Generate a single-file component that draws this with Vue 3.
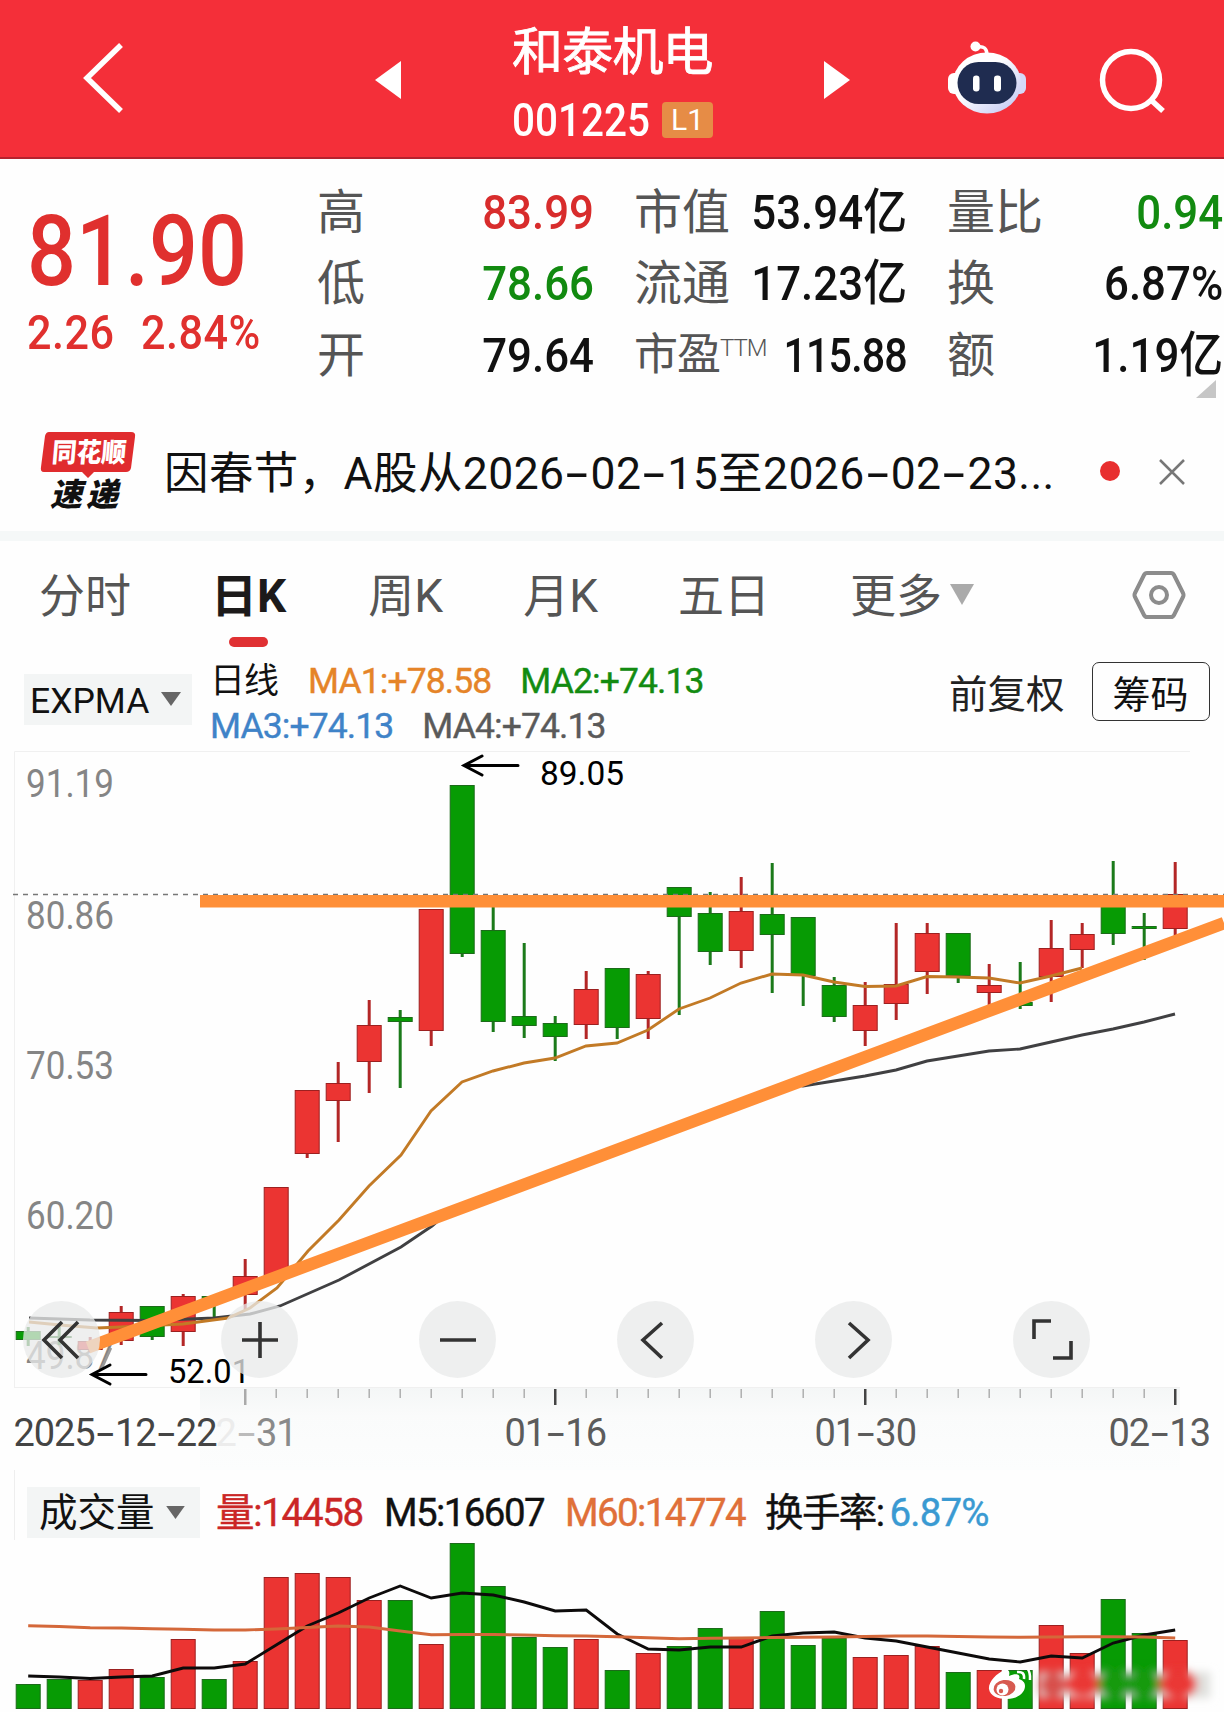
<script setup>
import { computed } from 'vue';

const quote = [
  { label: '高', value: '83.99', tone: 'up' },
  { label: '市值', value: '53.94亿' },
  { label: '量比', value: '0.94', tone: 'down' },
  { label: '低', value: '78.66', tone: 'down' },
  { label: '流通', value: '17.23亿' },
  { label: '换', value: '6.87%' },
  { label: '开', value: '79.64' },
  { label: '市盈', sup: 'TTM', value: '115.88' },
  { label: '额', value: '1.19亿' }
];

const notice = '因春节，A股从2026-02-15至2026-02-23...';
const noticeParts = notice.split(/(-)/);

const tabs = ['分时', '日K', '周K', '月K', '五日', '更多'];
const activeTab = '日K';

const STEP = 31;
const cx = (i) => 28.2 + i * STEP;

// kind, body top, body bottom, high, low
const candles = [
  ['g', 1331, 1340, 1327, 1346],
  ['g', 1336, 1338, 1325, 1345],
  ['r', 1341, 1350, 1337, 1352],
  ['r', 1312, 1341, 1306, 1345],
  ['g', 1306, 1337, 1306, 1340],
  ['r', 1296, 1332, 1294, 1346],
  ['g', 1296, 1301, 1296, 1318],
  ['r', 1276, 1295, 1259, 1310],
  ['r', 1187, 1277, 1187, 1277],
  ['r', 1090, 1154, 1090, 1158],
  ['r', 1083, 1101, 1062, 1142],
  ['r', 1025, 1062, 1000, 1093],
  ['g', 1017, 1022, 1010, 1088],
  ['r', 909, 1031, 909, 1046],
  ['g', 785, 954, 785, 957],
  ['g', 930, 1022, 903, 1032],
  ['g', 1016, 1026, 943, 1038],
  ['g', 1023, 1037, 1016, 1061],
  ['r', 989, 1025, 971, 1039],
  ['g', 968, 1028, 968, 1039],
  ['r', 974, 1019, 971, 1039],
  ['g', 887, 917, 887, 1015],
  ['g', 913, 952, 892, 965],
  ['r', 911, 951, 877, 968],
  ['g', 914, 935, 863, 993],
  ['g', 917, 976, 917, 1006],
  ['g', 985, 1017, 977, 1022],
  ['r', 1005, 1031, 982, 1046],
  ['r', 984, 1004, 923, 1020],
  ['r', 933, 972, 923, 994],
  ['g', 933, 976, 933, 983],
  ['r', 985, 993, 964, 1007],
  ['g', 1002, 1006, 962, 1009],
  ['r', 948, 977, 920, 1002],
  ['r', 934, 950, 923, 968],
  ['g', 903, 934, 861, 945],
  ['g', 926, 929, 913, 960],
  ['r', 894, 929, 862, 938]
];

const volumes = [
  1684, 1679, 1680, 1669, 1677, 1639, 1679, 1661, 1577, 1573, 1577, 1600, 1600,
  1644, 1543, 1586, 1637, 1647, 1639, 1670, 1653, 1646, 1628, 1638, 1611, 1645,
  1638, 1657, 1655, 1646, 1672, 1670, 1670, 1625, 1653, 1599, 1633, 1640
];
const volKind = (i) => candles[i][0];

const m5 = [
  1676, 1677, 1678.5, 1677, 1676, 1668, 1668, 1664, 1645, 1626, 1613, 1598,
  1586, 1598, 1593, 1595, 1602, 1611, 1610, 1634, 1649, 1650, 1647, 1647, 1636,
  1633, 1632, 1638, 1641, 1647, 1653, 1659, 1662, 1656, 1658, 1643, 1635, 1630
];
const m60 = [
  1625.7, 1626.5, 1627.7, 1628, 1628.7, 1629.2, 1630, 1630, 1629, 1627.5, 1626,
  1627, 1631, 1634.7, 1634.5, 1634.5, 1635, 1635.7, 1636, 1636.7, 1637.7,
  1638.7, 1638.2, 1638, 1637.5, 1637.2, 1637, 1636.5, 1636, 1636, 1636.5,
  1637, 1637.3, 1637, 1636.8, 1636.7, 1637, 1638
];
const toPoints = (list) => list.map((y, i) => `${cx(i)},${y}`).join(' ');
const m5Points = computed(() => toPoints(m5));
const m60Points = computed(() => toPoints(m60));

const ma1 =
  '29,1322 60,1325 97,1328 121,1327 183,1324 228,1318 250,1308 277,1288 308,1251 339,1220 369,1186 401,1155 431,1111 462,1082 493,1071 524,1063 555,1058 586,1046 617,1043 648,1030 679,1009 710,998 741,983 772,974 803,975 834,982 865,986.5 896,986 927,976.5 958,977 989,978 1020,983 1051,976 1082,968';
const ma4 =
  '29,1318 90,1320 152,1320.5 214,1318 250,1314 280,1306 339,1280 401,1247 432,1226 446,1214 620,1149 795,1084 803,1086 834,1081 865,1076 896,1070 927,1061 958,1056 989,1051 1020,1049 1051,1042 1082,1035 1113,1029 1144,1022 1175,1014';

const scale = [
  { text: '91.19', y: 797 },
  { text: '80.86', y: 929 },
  { text: '70.53', y: 1079 },
  { text: '60.20', y: 1229 },
  { text: '49.87', y: 1369 }
];

const ticks = Array.from({ length: 31 }, (_, i) => i + 7);
const isMajor = (i) => i % 10 === 7;

// every character of a date takes one cell of the same width
const dates = [
  { text: '2025-12-22', x: 14, cls: 'dark' },
  { text: '2-31', x: 216, cls: 'faded' },
  { text: '01-16', x: 505, cls: '' },
  { text: '01-30', x: 815, cls: '' },
  { text: '02-13', x: 1109, cls: '' }
];
const CELL = 20.3;
</script>

<template>
  <div class="page">
    <header class="top">
      <svg class="back" width="46" height="76" viewBox="0 0 46 76">
        <path d="M40 5 6 38 40 71" />
      </svg>
      <svg class="tri prev" width="26" height="38" viewBox="0 0 26 38"><path d="M26 0v38L0 19z" /></svg>
      <div class="title">
        <div class="name">和泰机电</div>
        <div class="code"><span class="num">001225</span><span class="badge">L1</span></div>
      </div>
      <svg class="tri next" width="26" height="38" viewBox="0 0 26 38"><path d="M0 0v38L26 19z" /></svg>
      <svg class="robot" width="80" height="76" viewBox="0 0 80 76">
        <defs>
          <linearGradient id="shell" x1="0" y1="0" x2="1" y2="1">
            <stop offset="0.4" stop-color="#fff" />
            <stop offset="1" stop-color="#bcc2f2" />
          </linearGradient>
        </defs>
        <path d="M30 7Q40 5 40 15" class="antenna" />
        <circle cx="28.500" cy="6.500" r="5" fill="#fff" />
        <rect x="1" y="33" width="14" height="21" rx="6" fill="#fff" />
        <rect x="65" y="33" width="14" height="21" rx="6" fill="#d5d8f8" />
        <ellipse cx="40" cy="43" rx="34" ry="30.500" fill="url(#shell)" />
        <rect x="10.500" y="22" width="59" height="42" rx="21" fill="#1f2c50" />
        <rect x="26" y="35.500" width="6.500" height="16" rx="3.200" fill="#fff" />
        <rect x="47" y="35.500" width="7" height="16" rx="3.200" fill="#fff" />
      </svg>
      <svg class="search" width="70" height="70" viewBox="0 0 70 70">
        <circle cx="33" cy="33" r="28.500" />
        <path d="M53 53 65 64" />
      </svg>
    </header>

    <section class="quote">
      <div class="price">
        <div class="last">81.90</div>
        <div class="change"><span>2.26</span><span>2.84%</span></div>
      </div>
      <div class="grid">
        <div v-for="q in quote" :key="q.label" class="cell" :class="{ tight: q.sup }">
          <span class="label">{{ q.label }}<sup v-if="q.sup">{{ q.sup }}</sup></span>
          <span class="value" :class="q.tone">{{ q.value }}</span>
        </div>
      </div>
      <svg class="corner" width="20" height="18" viewBox="0 0 20 18"><path d="M20 0v18H0z" /></svg>
    </section>

    <section class="notice">
      <div class="logo">
        <svg width="98" height="47" viewBox="0 0 98 47">
          <path d="M9 0H91Q96 0 95 5L91 36Q90 40 86 40H54L48 46 42 40H4Q0 40 1 35L5 4Q6 0 9 0Z" />
          <text x="50" y="30" text-anchor="middle" textLength="74" lengthAdjust="spacingAndGlyphs" transform="skewX(-5) translate(1 0)">同花顺</text>
        </svg>
        <b>速递</b>
      </div>
      <p>
        <template v-for="(part, i) in noticeParts" :key="i">
          <span v-if="part === '-'" class="dash">-</span>
          <template v-else>{{ part }}</template>
        </template>
      </p>
      <i class="dot"></i>
      <svg class="close" width="28" height="28" viewBox="0 0 28 28"><path d="M2 2 26 26M26 2 2 26" /></svg>
    </section>

    <nav class="tabs">
      <span v-for="t in tabs" :key="t" class="tab" :class="{ active: t === activeTab }">
        {{ t }}<svg v-if="t === '更多'" width="24" height="21" viewBox="0 0 24 21"><path d="M0 0H24L12 21z" /></svg>
      </span>
      <svg class="setting" width="54" height="50" viewBox="0 0 54 50">
        <path d="M15 3H39Q41 3 42 5L51 23Q52 25 51 27L42 45Q41 47 39 47H15Q13 47 12 45L3 27Q2 25 3 23L12 5Q13 3 15 3Z" />
        <circle cx="27" cy="25" r="8" />
      </svg>
    </nav>

    <section class="indicator">
      <div class="picker">EXPMA<svg width="20" height="14" viewBox="0 0 20 14"><path d="M0 0H20L10 14z" /></svg></div>
      <div class="ma">
        <div><span class="day">日线</span><span class="c1">MA1:+78.58</span><span class="c2">MA2:+74.13</span></div>
        <div><span class="c3">MA3:+74.13</span><span class="c4">MA4:+74.13</span></div>
      </div>
      <span class="adjust">前复权</span>
      <button class="chips">筹码</button>
    </section>

    <section class="kline">
      <svg width="1224" height="725" viewBox="0 745 1224 725">
        <defs>
          <linearGradient id="axisBg" x1="0" y1="0" x2="0" y2="1">
            <stop offset="0" stop-color="#f4f6f6" />
            <stop offset="0.35" stop-color="#fafbfb" />
            <stop offset="1" stop-color="#fcfdfd" />
          </linearGradient>
        </defs>
        <rect x="200" y="1387" width="980" height="83" fill="url(#axisBg)" />
        <path d="M14.500 1387V751.500H1190M14 1387.500H1180" class="frame" />
        <text v-for="s in scale" :key="s.text" x="26" :y="s.y" textLength="88" lengthAdjust="spacingAndGlyphs" class="scale">{{ s.text }}</text>

        <g v-for="(c, i) in candles" :key="i" :class="c[0]">
          <rect :x="cx(i) - 1.5" :y="c[3]" width="3" :height="c[4] - c[3]" class="wick" />
          <rect :x="cx(i) - 12" :y="c[1] + 0.5" width="24" :height="Math.max(c[2] - c[1] - 1, 1)" class="body" />
        </g>

        <polyline :points="ma4" class="line ma4" />
        <polyline :points="ma1" class="line ma1" />
        <path d="M13 894.500H1224" class="current" />
        <path d="M200 901.200H1224M88 1347.500 1224 923" class="trend" />

        <path d="M518 765.500H464M482 756 464 765.500 482 775" class="arrow" />
        <text x="540" y="785" textLength="84" lengthAdjust="spacingAndGlyphs" class="mark">89.05</text>
        <path d="M111 1348 102 1368" class="leader" />
        <path d="M146 1374.500H92M110 1365 92 1374.500 110 1384" class="arrow" />
        <text x="168" y="1383" textLength="82" lengthAdjust="spacingAndGlyphs" class="mark">52.01</text>

        <g v-for="i in ticks" :key="i">
          <rect v-if="isMajor(i)" :x="cx(i) - 1.2" y="1389" width="2.500" height="16" :fill="i === 7 ? '#aaa' : '#444'" />
          <rect v-else :x="cx(i) - 0.7" y="1389" width="1.400" height="9" fill="#aaa" />
        </g>
        <g v-for="d in dates" :key="d.x" class="date" :class="d.cls">
          <template v-for="(ch, k) in d.text" :key="k">
            <text v-if="ch === '-'" :x="d.x + CELL * (k + 0.5)" y="1445.500" textLength="22" lengthAdjust="spacingAndGlyphs" class="hy">-</text>
            <text v-else :x="d.x + CELL * (k + 0.5)" y="1445.500">{{ ch }}</text>
          </template>
        </g>
      </svg>
      <div class="tools">
        <button><svg viewBox="0 0 44 44"><path d="M22 4 4 22 22 40M38 4 20 22 38 40" /></svg></button>
        <button><svg viewBox="0 0 44 44"><path d="M22 4V40M4 22H40" /></svg></button>
        <button><svg viewBox="0 0 44 44"><path d="M4 22H40" /></svg></button>
        <button><svg viewBox="0 0 44 44"><path d="M28 5 9 22 28 40" /></svg></button>
        <button><svg viewBox="0 0 44 44"><path d="M17 5 36 22 17 40" /></svg></button>
        <button><svg viewBox="0 0 44 44"><path d="M21 3H4V21M41 23V40H23" /></svg></button>
      </div>
    </section>

    <section class="volume">
      <div class="vhead">
        <div class="picker">成交量<svg width="19" height="13" viewBox="0 0 20 14"><path d="M0 0H20L10 14z" /></svg></div>
        <span class="v1">量:14458</span>
        <span class="v2">M5:16607</span>
        <span class="v3">M60:14774</span>
        <span class="v4">换手率:<em>6.87%</em></span>
      </div>
      <svg width="1224" height="172" viewBox="0 1540 1224 172">
        <defs>
          <filter id="smudge" x="-10%" y="-40%" width="120%" height="180%"><feGaussianBlur stdDeviation="4" /></filter>
        </defs>
        <g v-for="(v, i) in volumes" :key="i" :class="volKind(i)">
          <rect :x="cx(i) - 12" :y="v + 0.5" width="24" :height="1708 - v" class="body" />
        </g>
        <polyline :points="m5Points" class="line m5" />
        <polyline :points="m60Points" class="line m60" />

        <g filter="url(#smudge)">
          <rect x="1038" y="1672" width="172" height="26" fill="#dfe0dd" />
          <ellipse cx="1053" cy="1685" rx="13" ry="13" fill="#d8504c" />
          <ellipse cx="1083" cy="1684" rx="18" ry="13" fill="#ea3936" />
          <ellipse cx="1115" cy="1684" rx="17" ry="15" fill="#129a0d" />
          <ellipse cx="1144" cy="1684" rx="17" ry="15" fill="#129a0d" />
          <ellipse cx="1178" cy="1684" rx="19" ry="14" fill="#ea3936" />
        </g>
        <g class="weibo">
          <path d="M1005 1670C996 1673 988 1683 989 1689C990 1696 998 1699 1007 1699C1017 1699 1025 1693 1025 1686C1025 1682 1022 1680 1019 1679C1021 1674 1016 1673 1009 1676C1010 1672 1009 1669 1005 1670Z" fill="#fff" />
          <ellipse cx="1004.500" cy="1688" rx="11" ry="8" transform="rotate(-8 1004.500 1688)" fill="#d75a50" />
          <circle cx="1002.500" cy="1689.500" r="6" fill="#fff" />
          <circle cx="1001" cy="1691" r="2.200" fill="#d75a50" />
          <path d="M1017 1666Q1031 1664 1030 1680M1017 1672Q1025 1671 1024 1679" class="wave" />
        </g>
      </svg>
    </section>
  </div>
</template>

<style>
body {
  margin: 0;
  background: #fefefe;
}
</style>

<style scoped>
.page {
  width: 1224px;
  height: 1712px;
  overflow: hidden;
  background: #fefefe;
  font-family: Roboto, "Noto Sans CJK SC", sans-serif;
  color: #111;
}

svg {
  display: block;
  flex: none;
}

.top {
  display: flex;
  box-sizing: border-box;
  height: 159px;
  padding-left: 81px;
  background: #f42f39;
  border-bottom: 2px solid #b5222d;
  color: #fff;
}

.back {
  margin-top: 40px;
}

.back path,
.search {
  fill: none;
  stroke: #fff;
  stroke-width: 5.5;
}

.tri {
  fill: #fff;
  margin-top: 61px;
}

.prev {
  margin-left: 248px;
}

.title {
  width: 203px;
  margin-left: 111px;
  white-space: nowrap;
}

.name {
  font-size: 51px;
  line-height: 60px;
  margin-top: 23px;
  letter-spacing: -0.8px;
  -webkit-text-stroke: 0.8px #fff;
}

.code {
  display: flex;
  align-items: center;
  line-height: 40px;
  margin-top: 17px;
}

.num {
  width: 137px;
  font-size: 46px;
  font-weight: 500;
  transform: scaleX(0.88);
  transform-origin: left;
}

.badge {
  width: 51px;
  height: 36px;
  margin-left: 13px;
  border-radius: 4px;
  background: #e68c46;
  font-size: 30px;
  line-height: 36px;
  text-align: center;
}

.next {
  margin-left: 109px;
}

.robot {
  margin: 40px 0 0 97px;
}

.antenna {
  fill: none;
  stroke: #fff;
  stroke-width: 3.5;
}

.search {
  margin: 47px 0 0 71px;
}

.quote {
  display: flex;
  position: relative;
  height: 241px;
}

.price {
  width: 290px;
  padding-left: 27px;
  color: #e0302e;
  font-weight: 500;
}

.last {
  font-size: 98px;
  line-height: 98px;
  margin-top: 44px;
  transform: scaleX(0.88);
  transform-origin: left;
}

.change {
  display: flex;
  gap: 30px;
  font-size: 48.5px;
  line-height: 50px;
  margin-top: 7px;
  letter-spacing: 0.5px;
  transform: scaleX(0.89);
  transform-origin: left;
}

.grid {
  display: grid;
  grid-template-columns: 277px 273px 276px;
  grid-auto-rows: 71.3px;
  column-gap: 40px;
  margin-top: 18px;
}

.cell {
  display: flex;
  justify-content: space-between;
  line-height: 71px;
  white-space: nowrap;
}

.label {
  font-size: 48px;
  color: #555;
}

.tight .label {
  font-size: 44px;
  letter-spacing: -1px;
}

sup {
  font-size: 24px;
  font-weight: 300;
  vertical-align: 14px;
  line-height: 0;
}

.value {
  font-size: 49px;
  font-weight: 500;
  transform: scaleX(0.895);
  transform-origin: right;
}

.tight .value {
  margin-left: -30px;
  letter-spacing: -1px;
  transform: scaleX(0.84);
}

.up {
  color: #d82c2c;
}

.down {
  color: #128a10;
}

.corner {
  position: absolute;
  right: 8px;
  top: 221px;
  fill: #c6c6c6;
}

.notice {
  display: flex;
  height: 131px;
  padding-left: 40px;
  border-bottom: 10px solid #f5f8f8;
}

.logo {
  width: 98px;
  margin-top: 32px;
}

.logo path {
  fill: #e02c2e;
}

.logo text {
  fill: #fff;
  font-size: 27px;
  font-weight: 900;
}

.logo b {
  display: block;
  font-size: 32px;
  line-height: 34px;
  font-weight: 900;
  font-style: italic;
  letter-spacing: 4px;
  padding-left: 10px;
  margin-top: -1px;
}

.notice p {
  width: 900px;
  margin: 41px 0 0 26px;
  font-size: 44.5px;
  line-height: 64px;
  letter-spacing: 0.4px;
  white-space: nowrap;
}

.dash {
  display: inline-block;
  width: 26px;
  text-align: center;
  font-family: Inter, sans-serif;
  transform: scaleX(1.35);
}

.dot {
  width: 20px;
  height: 20px;
  margin: 61px 0 0 36px;
  border-radius: 50%;
  background: #e82e2e;
}

.close {
  margin: 58px 0 0 38px;
  stroke: #777;
  stroke-width: 2.5;
}

.tabs {
  display: flex;
  height: 109px;
  padding-left: 39px;
  font-size: 46px;
  line-height: 66px;
  color: #555;
}

.tab {
  position: relative;
  display: flex;
  align-items: center;
  height: 66px;
  margin-top: 22px;
  margin-right: 80px;
}

.tab:nth-child(2) {
  margin-right: 82px;
}

.tab svg {
  margin: -3px 0 0 8px;
  fill: #aaa;
}

.active {
  color: #1c1a1a;
  font-weight: 700;
}

.active::after {
  content: "";
  position: absolute;
  left: 18px;
  bottom: -18px;
  width: 39px;
  height: 10px;
  border-radius: 5px;
  background: #e03133;
}

.setting {
  margin: 29px 0 0 78px;
  fill: none;
  stroke: #8c8c8c;
  stroke-width: 4;
}

.indicator {
  display: flex;
  height: 95px;
}

.picker {
  display: flex;
  align-items: center;
  justify-content: space-between;
  box-sizing: border-box;
  background: #f3f5f5;
}

.picker svg {
  fill: #666;
}

.indicator .picker {
  width: 168px;
  height: 51px;
  margin: 24px 0 0 24px;
  padding: 3px 11px 0 6px;
  font-size: 35.5px;
}

.indicator .picker svg {
  margin-top: -5px;
}

.ma {
  width: 737px;
  margin: 9px 0 0 18px;
  font-size: 35.5px;
  line-height: 45px;
  letter-spacing: -0.9px;
  white-space: nowrap;
  -webkit-text-stroke: 0.4px;
}

.ma div {
  display: flex;
  gap: 29px;
}

.day {
  width: 69px;
  font-size: 35px;
  -webkit-text-stroke: 0;
}

.c1 {
  color: #e58428;
}

.c2 {
  color: #138b11;
}

.c3 {
  color: #3f83c8;
}

.c4 {
  color: #5a5a5a;
}

.adjust {
  margin: 18px 0 0 2px;
  font-size: 38.5px;
  line-height: 54px;
  color: #222;
}

.chips {
  box-sizing: border-box;
  width: 118px;
  height: 59px;
  margin: 12px 0 0 27px;
  padding: 0;
  border: 1.5px solid #333;
  border-radius: 7px;
  background: none;
  font: 38px Roboto, "Noto Sans CJK SC", sans-serif;
  color: #111;
}

.kline {
  position: relative;
  height: 725px;
}

.frame {
  fill: none;
  stroke: #f0f0f0;
}

.scale {
  font-size: 39px;
  fill: #858585;
}

.mark {
  font-size: 34px;
  fill: #000;
}

.r {
  fill: #eb3432;
  stroke: #9c2020;
}

.g {
  fill: #079b04;
  stroke: #1c6b1a;
}

.r .wick {
  fill: #b32626;
  stroke: none;
}

.g .wick {
  fill: #1b7a1a;
  stroke: none;
}

.body {
  stroke-width: 1;
}

.line {
  fill: none;
  stroke-width: 2.9;
}

.ma1 {
  stroke: #c27a26;
}

.ma4 {
  stroke: #404042;
}

.current {
  stroke: #777;
  stroke-width: 1.6;
  stroke-dasharray: 5 5;
}

.trend {
  fill: none;
  stroke: #ff8f38;
  stroke-width: 12.5;
}

.arrow {
  fill: none;
  stroke: #000;
  stroke-width: 3;
  stroke-linecap: round;
}

.leader {
  stroke: #999;
  stroke-width: 2.5;
}

.date {
  font-size: 38px;
  fill: #5c5c5c;
  text-anchor: middle;
}

.date.dark {
  fill: #444;
}

.date.faded {
  fill: #8a8a8a;
}

.date.faded text:first-child {
  fill: #ececec;
}

.date.faded .hy {
  fill: #bbb;
}

.hy {
  font-family: Inter, sans-serif;
}

/* floating chart controls */
.tools {
  position: absolute;
  left: 23px;
  top: 556px;
  display: flex;
  gap: 121px;
}

.tools button {
  display: flex;
  align-items: center;
  justify-content: center;
  width: 77px;
  height: 77px;
  padding: 0;
  border: none;
  border-radius: 50%;
  background: rgba(233, 234, 234, 0.76);
}

.tools svg {
  width: 44px;
  height: 44px;
  fill: none;
  stroke: #333;
  stroke-width: 3.6;
}

.volume {
  height: 242px;
}

.vhead {
  display: flex;
  box-sizing: border-box;
  height: 70px;
  margin-left: 14px;
  padding: 14px 0 0 12px;
  border-left: 1px solid #eee;
  font-size: 38.5px;
  line-height: 49px;
  letter-spacing: -1.6px;
  white-space: nowrap;
}

.vhead .picker {
  width: 173px;
  height: 51px;
  margin-top: 3px;
  padding: 0 15px 0 12px;
  letter-spacing: 0;
}

.vhead span {
  margin-top: 4px;
  -webkit-text-stroke: 0.4px;
}

.v1 {
  width: 168px;
  margin-left: 16px;
  letter-spacing: -1.3px;
  color: #cb2626;
}

.v2 {
  width: 181px;
}

.v3 {
  width: 200px;
  color: #e07039;
}

.v4 em {
  margin-left: 6px;
  font-style: normal;
  letter-spacing: -0.8px;
  color: #3a9ad2;
}

.m5 {
  stroke: #0d0b0b;
}

.m60 {
  stroke: #d4683a;
}

.wave {
  fill: none;
  stroke: #fff;
  stroke-width: 2.5;
}
</style>
